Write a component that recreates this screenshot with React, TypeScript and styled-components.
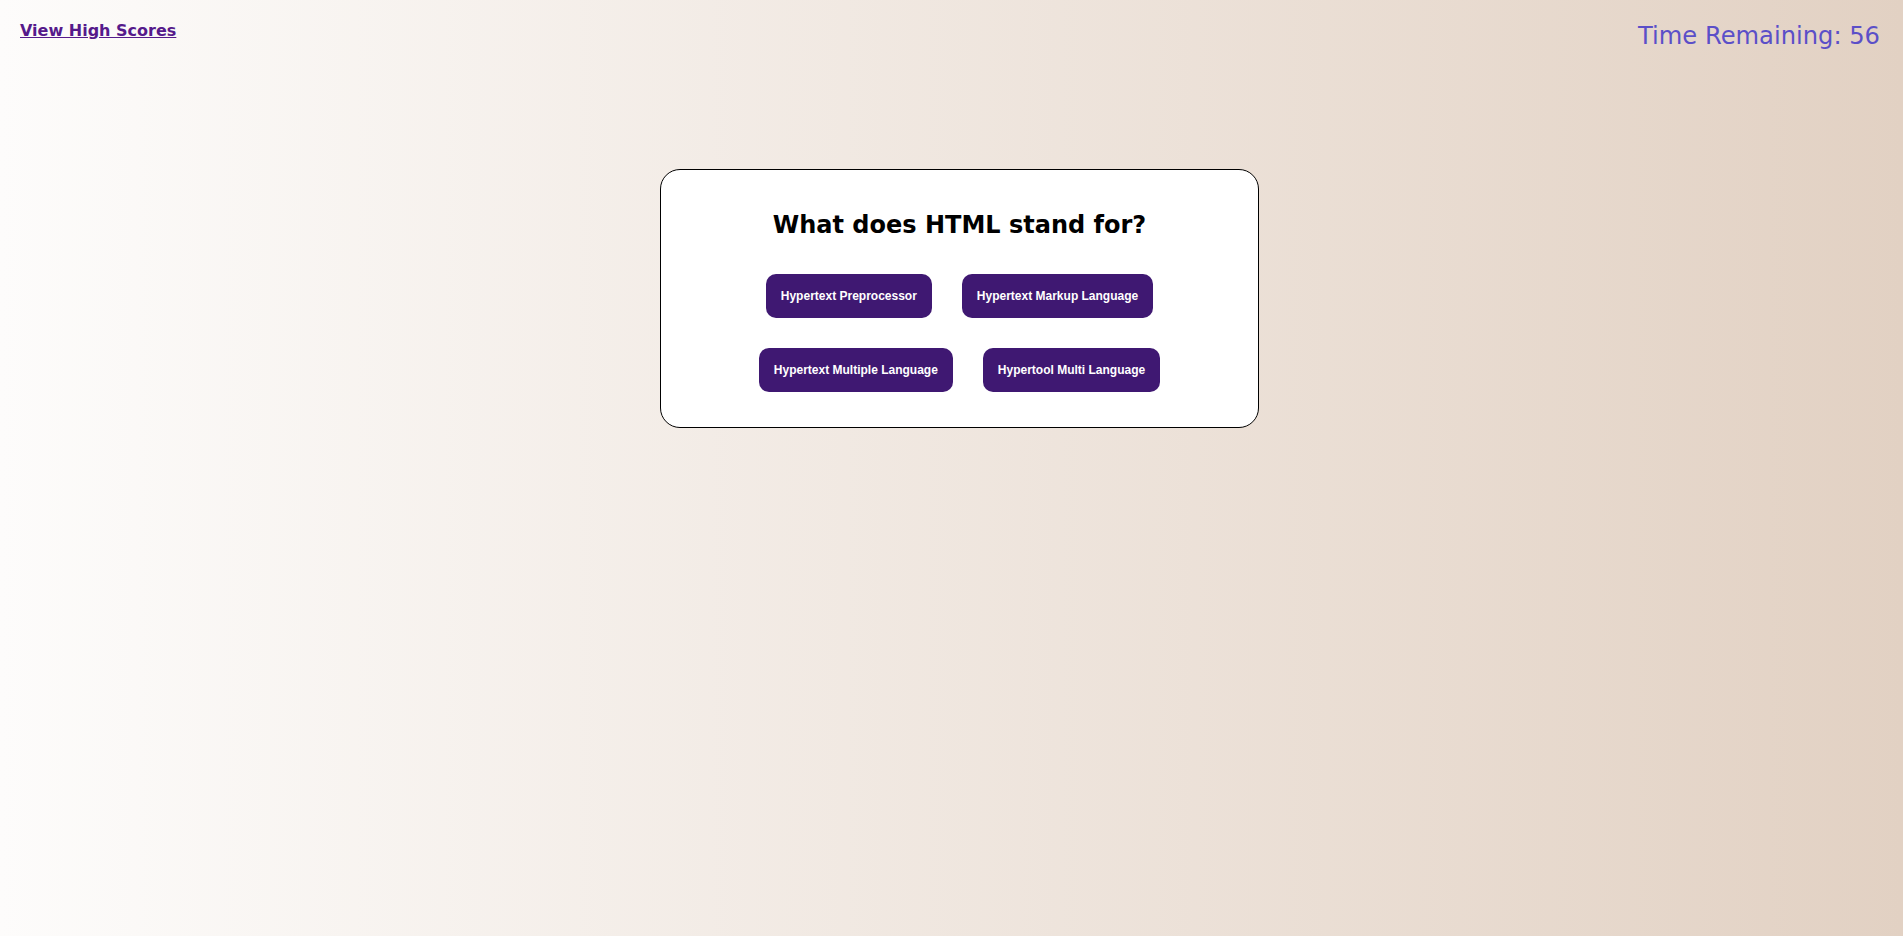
import React from "react";
import styled, { createGlobalStyle } from "styled-components";

const GlobalStyle = createGlobalStyle`
  html, body {
    margin: 0;
    padding: 0;
  }
  body {
    min-height: 100vh;
    background: linear-gradient(to right, #fdfcfb 0%, #e2d1c3 100%);
    font-family: "DejaVu Sans", Verdana, sans-serif;
  }
`;

const Page = styled.div`
  min-height: 100vh;
  display: flex;
  flex-direction: column;
`;

const Header = styled.header`
  display: flex;
  justify-content: space-between;
  align-items: flex-start;
  padding: 21px 23px 0 20px;
`;

const HighScoresLink = styled.a`
  font-family: "DejaVu Sans", Verdana, sans-serif;
  font-weight: bold;
  font-size: 16px;
  color: #551a8b;
  text-decoration: underline;
  cursor: pointer;
`;

const Timer = styled.div`
  font-family: "DejaVu Sans", Verdana, sans-serif;
  font-size: 24.2px;
  margin-top: 1px;
  color: #5b4fc8;
`;

const Main = styled.main`
  display: flex;
  justify-content: center;
  padding: 119px 0 0 16px;
`;

const Card = styled.section`
  box-sizing: border-box;
  width: 599px;
  background: #ffffff;
  border: 1px solid #000000;
  border-radius: 20px;
  padding: 20px;
  text-align: center;
`;

const Question = styled.h2`
  font-family: "DejaVu Sans", Verdana, sans-serif;
  font-weight: bold;
  font-size: 24px;
  margin: 21px 0 20px;
  color: #000;
`;

const Choices = styled.div`
  display: flex;
  justify-content: center;
`;

const Choice = styled.button`
  font-family: "Liberation Sans", Arial, sans-serif;
  font-weight: bold;
  font-size: 12px;
  line-height: 14px;
  color: #ffffff;
  background: #3f1872;
  border: none;
  border-radius: 10px;
  padding: 15px;
  margin: 15px;
  cursor: pointer;
`;

const rows = [
  ["Hypertext Preprocessor", "Hypertext Markup Language"],
  ["Hypertext Multiple Language", "Hypertool Multi Language"],
];

export default function App() {
  return (
    <>
      <GlobalStyle />
      <Page>
        <Header>
          <HighScoresLink>View High Scores</HighScoresLink>
          <Timer>Time Remaining: 56</Timer>
        </Header>
        <Main>
          <Card>
            <Question>What does HTML stand for?</Question>
            {rows.map((row, i) => (
              <Choices key={i}>
                {row.map((c) => (
                  <Choice key={c}>{c}</Choice>
                ))}
              </Choices>
            ))}
          </Card>
        </Main>
      </Page>
    </>
  );
}
